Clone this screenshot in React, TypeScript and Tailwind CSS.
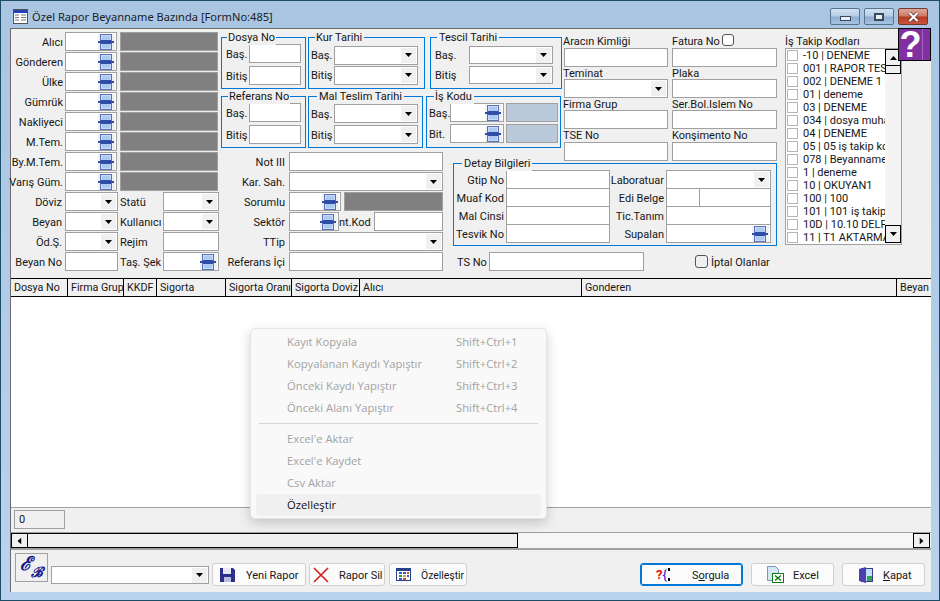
import React from "react";

const Arrow = ({ className = "" }: { className?: string }) => (
  <svg width="7" height="4" viewBox="0 0 7 4" className={className}>
    <path d="M0 0h7L3.5 4z" fill="#000" />
  </svg>
);

const LookupIcon = () => (
  <span className="flex h-[16px] w-[17px] shrink-0 items-center justify-center bg-[#f0f0f0]">
    <svg width="17" height="16" viewBox="0 0 17 16">
      <rect x="2.5" y="0.5" width="11" height="15" fill="#c9defa" stroke="#5a6fb5" />
      <path d="M4 3h8M4 5h8M4 11h8M4 13h8" stroke="#8fb4e8" />
      <rect x="0" y="7" width="16" height="2" fill="#2f4da6" />
      <rect x="3" y="6" width="10" height="4" fill="#2f4da6" />
    </svg>
  </span>
);

const Box = ({ className = "", children }: { className?: string; children?: React.ReactNode }) => (
  <div className={"flex shrink-0 items-center justify-end border border-[#a0a0a0] bg-white " + className}>{children}</div>
);

const Combo = ({ className = "" }: { className?: string }) => (
  <Box className={"pr-px " + className}>
    <span className="flex h-[15px] w-[15px] items-center justify-center bg-[#f0f0f0]">
      <Arrow />
    </span>
  </Box>
);

const Lookup = ({ className = "" }: { className?: string }) => (
  <Box className={"pr-px " + className}>
    <LookupIcon />
  </Box>
);

const Label = ({ className = "", children }: { className?: string; children: React.ReactNode }) => (
  <span className={"mt-[2px] shrink-0 whitespace-nowrap " + className}>{children}</span>
);

const FieldLabel = ({ className = "", children }: { className?: string; children: React.ReactNode }) => (
  <span className={"shrink-0 whitespace-nowrap " + className}>{children}</span>
);

const Group = ({ title, titleClass, className, children }: { title: string; titleClass: string; className: string; children: React.ReactNode }) => (
  <div className={"relative h-[52px] shrink-0 border border-[#0078d7] " + className}>
    <span className={"absolute top-[-7px] whitespace-nowrap bg-[#f0f0f0] px-[1px] leading-[14px] " + titleClass}>{title}</span>
    {children}
  </div>
);

const leftRows = ["Alıcı", "Gönderen", "Ülke", "Gümrük", "Nakliyeci", "M.Tem.", "By.M.Tem.", "Varış Güm."];
const codes = [
  "-10 | DENEME",
  "001 | RAPOR TES",
  "002 | DENEME 1",
  "01 | deneme",
  "03 | DENEME",
  "034 | dosya muha",
  "04 | DENEME",
  "05 | 05 iş takip ko",
  "078 | Beyanname",
  "1 | deneme",
  "10 | OKUYAN1",
  "100 | 100",
  "101 | 101 iş takip",
  "10D | 10.10 DELF",
  "11 | T1 AKTARMA",
];
const columns: [string, string][] = [
  ["Dosya No", "w-[56px]"],
  ["Firma Grup", "w-[56px]"],
  ["KKDF", "w-[33px]"],
  ["Sigorta", "w-[69px]"],
  ["Sigorta Oranı", "w-[66px]"],
  ["Sigorta Doviz", "w-[68px]"],
  ["Alıcı", "w-[222px]"],
  ["Gonderen", "w-[315px]"],
  ["Beyan", "w-[35px]"],
];

const ActionButton = ({ className, icon, label, labelClass }: { className: string; icon: React.ReactNode; label: React.ReactNode; labelClass: string }) => (
  <button className={"flex h-[23px] shrink-0 items-center rounded-[3px] border border-[#d0d0d0] bg-[#fbfbfb] " + className}>
    {icon}
    <span className={"mt-[2px] whitespace-nowrap " + labelClass}>{label}</span>
  </button>
);

const MenuItem = ({ label, shortcut }: { label: string; shortcut?: string }) => (
  <div className="flex h-[22px] items-center pl-[36px] text-[#a3a3a3]">
    <span className="w-[169px] whitespace-nowrap">{label}</span>
    {shortcut && <span className="whitespace-nowrap">{shortcut}</span>}
  </div>
);

export default function App() {
  return (
    <div className="relative h-[601px] w-[940px] overflow-hidden border border-[#1d4c66] bg-gradient-to-b from-[#a9c5e2] to-[#b9d3ee] pl-[9px] pr-[7px] font-['Roboto',sans-serif] text-[11px] leading-[14px] text-[#161616]">
      {/* title bar */}
      <div className="flex h-[27px] items-center pl-[3px] pt-[4px]">
        <svg width="15" height="15" viewBox="0 0 15 15" className="shrink-0">
          <rect x="0.5" y="0.5" width="14" height="14" fill="#fff" stroke="#555" />
          <rect x="1" y="1" width="13" height="3" fill="#2340b8" />
          <path d="M2 6h4M2 8.500h4M2 11h4M8 6h5M8 8.500h5M8 11h5" stroke="#777" />
        </svg>
        <span className="ml-[4px] whitespace-nowrap font-['Noto_Sans',sans-serif] text-[11.1px] text-[#17202a]">Özel Rapor Beyanname Bazında [FormNo:485]</span>
        <div className="ml-auto mr-[4px] flex gap-[4px]">
          <div className="flex h-[17px] w-[30px] items-center justify-center rounded-[2px] border border-[#56748f] bg-[linear-gradient(#d3e2f2_0%,#b7cde6_45%,#8fadd0_55%,#a9c4e2_100%)]">
            <span className="mt-[3px] h-[5px] w-[11px] border border-[#3a4a5c] bg-[#e8eef5]" />
          </div>
          <div className="flex h-[17px] w-[30px] items-center justify-center rounded-[2px] border border-[#56748f] bg-[linear-gradient(#d3e2f2_0%,#b7cde6_45%,#8fadd0_55%,#a9c4e2_100%)]">
            <span className="h-[8px] w-[10px] border-2 border-[#3a4a5c] bg-[#e8eef5]" />
          </div>
          <div className="flex h-[17px] w-[30px] items-center justify-center rounded-[2px] border border-[#6e3a32] bg-[linear-gradient(#dca899_0%,#cf7a68_45%,#b83a22_55%,#c9553d_100%)]">
            <svg width="13" height="10" viewBox="0 0 13 10">
              <path d="M2.500 1l8 8M10.500 1l-8 8" stroke="#3a2a2a" strokeWidth="3.400" />
              <path d="M2.500 1l8 8M10.500 1l-8 8" stroke="#fff" strokeWidth="2.200" />
            </svg>
          </div>
        </div>
      </div>

      {/* client */}
      <div className="flex h-[564px] w-[921px] flex-col border-l border-t border-[#6d6d6d] bg-[#f0f0f0]">
        {/* form */}
        <div className="flex h-[249px] shrink-0 pl-[3px] pt-[3px]">
          {/* column A */}
          <div className="flex w-[205px] shrink-0 flex-col gap-px">
            {leftRows.map((r) => (
              <div key={r} className="flex h-[19px] items-center">
                <Label className="flex w-[49px] justify-end">{r}</Label>
                <Lookup className="ml-[2px] h-[19px] w-[52px]" />
                <div className="ml-[3px] h-[19px] w-[98px] border border-[#a0a0a0] bg-[#808080]" />
              </div>
            ))}
            <div className="flex h-[19px] items-center">
              <Label className="flex w-[48px] justify-end">Döviz</Label>
              <Combo className="ml-[3px] h-[19px] w-[53px]" />
              <Label className="ml-[2px] w-[43px]">Statü</Label>
              <Combo className="h-[19px] w-[56px]" />
            </div>
            <div className="flex h-[19px] items-center">
              <Label className="flex w-[48px] justify-end">Beyan</Label>
              <Combo className="ml-[3px] h-[19px] w-[53px]" />
              <Label className="ml-[2px] w-[43px]">Kullanıcı</Label>
              <Combo className="h-[19px] w-[56px]" />
            </div>
            <div className="flex h-[19px] items-center">
              <Label className="flex w-[48px] justify-end">Öd.Ş.</Label>
              <Combo className="ml-[3px] h-[19px] w-[53px]" />
              <Label className="ml-[2px] w-[43px]">Rejim</Label>
              <Box className="h-[19px] w-[56px]" />
            </div>
            <div className="flex h-[19px] items-center">
              <Label className="flex w-[48px] justify-end">Beyan No</Label>
              <Box className="ml-[3px] h-[19px] w-[53px]" />
              <Label className="ml-[2px] w-[43px]">Taş. Şek</Label>
              <Lookup className="h-[19px] w-[56px]" />
            </div>
          </div>

          {/* middle */}
          <div className="ml-[2px] grid w-[555px] shrink-0 grid-cols-[227px_112px_216px] grid-rows-[118px_12px_110px]">
            {/* groups */}
            <div className="col-span-2 flex flex-col gap-[7px] pt-[5px]">
              <div className="flex">
                <Group title="Dosya No" titleClass="left-[5px]" className="w-[85px]">
                  <div className="flex flex-col gap-[3px] pl-[4px] pt-[6px]">
                    <div className="flex h-[19px] items-center"><Label className="w-[23px]">Baş.</Label><Box className="h-[19px] w-[52px]" /></div>
                    <div className="flex h-[19px] items-center"><Label className="w-[23px]">Bitiş</Label><Box className="h-[19px] w-[52px]" /></div>
                  </div>
                </Group>
                <Group title="Kur Tarihi" titleClass="left-[6px] pr-[2px]" className="ml-[2px] w-[117px]">
                  <div className="flex flex-col gap-[2px] pl-[2px] pt-[8px]">
                    <div className="flex h-[18px] items-center"><Label className="w-[23px]">Baş.</Label><Combo className="h-[19px] w-[84px]" /></div>
                    <div className="flex h-[18px] items-center"><Label className="w-[23px]">Bitiş</Label><Combo className="h-[19px] w-[84px]" /></div>
                  </div>
                </Group>
                <Group title="Tescil Tarihi" titleClass="left-[6px] px-[2px]" className="ml-[5px] w-[132px]">
                  <div className="flex flex-col gap-[2px] pl-[4px] pt-[8px]">
                    <div className="flex h-[18px] items-center"><Label className="w-[34px]">Baş.</Label><Combo className="h-[18px] w-[84px]" /></div>
                    <div className="flex h-[18px] items-center"><Label className="w-[34px]">Bitiş</Label><Combo className="h-[18px] w-[84px]" /></div>
                  </div>
                </Group>
              </div>
              <div className="flex">
                <Group title="Referans No" titleClass="left-[6px]" className="w-[85px]">
                  <div className="flex flex-col gap-[3px] pl-[4px] pt-[6px]">
                    <div className="flex h-[19px] items-center"><Label className="w-[23px]">Baş.</Label><Box className="h-[19px] w-[52px]" /></div>
                    <div className="flex h-[19px] items-center"><Label className="w-[23px]">Bitiş</Label><Box className="h-[19px] w-[52px]" /></div>
                  </div>
                </Group>
                <Group title="Mal Teslim Tarihi" titleClass="left-[8px] px-[2px]" className="ml-[2px] w-[115px]">
                  <div className="flex flex-col gap-[2px] pl-[2px] pt-[7px]">
                    <div className="flex h-[19px] items-center"><Label className="w-[23px]">Baş.</Label><Combo className="h-[19px] w-[84px]" /></div>
                    <div className="flex h-[19px] items-center"><Label className="w-[23px]">Bitiş</Label><Combo className="h-[19px] w-[84px]" /></div>
                  </div>
                </Group>
                <Group title="İş Kodu" titleClass="left-[7px] pr-[2px]" className="ml-[3px] w-[135px]">
                  <div className="flex flex-col gap-[2px] pl-[2px] pt-[6px]">
                    <div className="flex h-[19px] items-center">
                      <Label className="w-[21px]">Baş.</Label><Lookup className="h-[19px] w-[54px]" />
                      <div className="ml-[2px] h-[19px] w-[52px] border border-[#a0a0a0] bg-[#b9c9d9]" />
                    </div>
                    <div className="flex h-[19px] items-center">
                      <Label className="w-[21px]">Bit.</Label><Lookup className="h-[19px] w-[54px]" />
                      <div className="ml-[2px] h-[19px] w-[52px] border border-[#a0a0a0] bg-[#b9c9d9]" />
                    </div>
                  </div>
                </Group>
              </div>
            </div>

            {/* fields */}
            <div className="col-start-3 row-span-2 row-start-1 grid grid-cols-[104px_105px] content-start gap-x-[4px] pl-[4px] pt-[4px]">
              {[
                ["Aracın Kimliği", "Fatura No"],
                ["Teminat", "Plaka"],
                ["Firma Grup", "Ser.Bol.Islem No"],
                ["TSE No", "Konşimento No"],
              ].map(([a, b], i) => (
                <React.Fragment key={a}>
                  <div className="flex flex-col">
                    <FieldLabel className={"-ml-[1px] h-[12px] " + (i ? "leading-[14px]" : "leading-[12px]")}>{a}</FieldLabel>
                    {i === 1 ? <Combo className="h-[19px] w-[104px]" /> : <Box className={"h-[19px] w-[104px] " + (i === 3 ? "mt-px" : "")} />}
                  </div>
                  <div className="flex flex-col">
                    <div className="flex h-[12px] items-start">
                      <FieldLabel className={i ? "leading-[14px]" : "w-[50px] leading-[12px]"}>{b}</FieldLabel>
                      {i === 0 && <span className="-mt-[2px] h-[12px] w-[12px] rounded-[3px] border border-[#555] bg-white" />}
                    </div>
                    <Box className={"h-[19px] w-[105px] " + (i === 3 ? "mt-px" : "")} />
                  </div>
                </React.Fragment>
              ))}
            </div>

            {/* mid rows */}
            <div className="row-span-2 row-start-2 flex flex-col gap-px pt-[2px]">
              <div className="flex h-[19px] items-center"><Label className="flex w-[64px] justify-end">Not III</Label><Box className="ml-[4px] h-[19px] w-[154px]" /></div>
              <div className="flex h-[19px] items-center"><Label className="flex w-[64px] justify-end">Kar. Sah.</Label><Combo className="ml-[4px] h-[19px] w-[154px]" /></div>
              <div className="flex h-[19px] items-center">
                <Label className="flex w-[64px] justify-end">Sorumlu</Label><Lookup className="ml-[4px] h-[19px] w-[52px]" />
                <div className="ml-[3px] h-[19px] w-[99px] border border-[#a0a0a0] bg-[#808080]" />
              </div>
              <div className="flex h-[19px] items-center">
                <Label className="flex w-[64px] justify-end">Sektör</Label><Lookup className="ml-[4px] h-[19px] w-[50px]" />
                <Label className="w-[35px]">nt.Kod</Label><Box className="h-[19px] w-[69px]" />
              </div>
              <div className="flex h-[19px] items-center"><Label className="flex w-[64px] justify-end">TTip</Label><Combo className="ml-[4px] h-[19px] w-[154px]" /></div>
              <div className="flex h-[19px] items-center"><Label className="flex w-[64px] justify-end">Referans İçi</Label><Box className="ml-[4px] h-[19px] w-[154px]" /></div>
            </div>

            {/* detail */}
            <div className="col-span-2 col-start-2 row-start-3 pl-[5px] pt-[1px]">
              <div className="relative h-[83px] w-[324px] border border-[#0078d7] pt-[6px]">
                <span className="absolute left-[8px] top-[-7px] whitespace-nowrap bg-[#f0f0f0] px-[2px] leading-[14px]">Detay Bilgileri</span>
                <div className="flex">
                  <div className="flex flex-col">
                    {["Gtip No", "Muaf Kod", "Mal Cinsi", "Tesvik No"].map((l, i) => (
                      <div key={l} className={"flex h-[19px] items-center " + (i ? "-mt-px" : "")}>
                        <Label className="flex w-[50px] justify-end">{l}</Label>
                        <Box className="ml-[2px] h-[19px] w-[104px]" />
                      </div>
                    ))}
                  </div>
                  <div className="ml-[2px] flex flex-col">
                    {["Laboratuar", "Edi Belge", "Tic.Tanım", "Supalan"].map((l, i) => (
                      <div key={l} className={"flex h-[19px] items-center " + (i ? "-mt-px" : "")}>
                        <Label className="flex w-[52px] justify-end">{l}</Label>
                        {i === 0 && <Combo className="ml-[2px] h-[19px] w-[105px]" />}
                        {i === 1 && (
                          <>
                            <Box className="ml-[2px] h-[19px] w-[34px]" />
                            <Box className="-ml-px h-[19px] w-[72px]" />
                          </>
                        )}
                        {i === 2 && <Box className="ml-[2px] h-[19px] w-[105px]" />}
                        {i === 3 && <Lookup className="ml-[2px] h-[19px] w-[105px]" />}
                      </div>
                    ))}
                  </div>
                </div>
              </div>
              <div className="mt-[6px] flex h-[19px] items-center pl-[4px]">
                <Label className="w-[32px]">TS No</Label>
                <Box className="h-[19px] w-[155px]" />
                <span className="ml-[51px] h-[13px] w-[13px] rounded-[3px] border border-[#555] bg-[#f0f0f0]" />
                <Label className="ml-[3px]">İptal Olanlar</Label>
              </div>
            </div>
          </div>

          {/* code list */}
          <div className="ml-[9px] flex w-[117px] shrink-0 flex-col pt-[4px]">
            <FieldLabel className="h-[12px] leading-[12px]">İş Takip Kodları</FieldLabel>
            <div className="flex h-[197px] border border-[#a0a0a0] bg-white">
              <div className="w-[99px] shrink-0 overflow-hidden">
                {codes.map((c) => (
                  <div key={c} className="flex h-[13px] items-center pl-[1px]">
                    <span className="h-[11px] w-[11px] shrink-0 border border-[#b5b5b5] bg-white" />
                    <span className="ml-[5px] whitespace-nowrap">{c}</span>
                  </div>
                ))}
              </div>
              <div className="flex flex-1 flex-col bg-[#f4f4f4]">
                <div className="flex h-[17px] items-center justify-center border border-black bg-[#f0f0f0]"><Arrow className="rotate-180" /></div>
                <div className="-mt-px h-[9px] border border-black bg-[#f0f0f0]" />
                <div className="mt-auto flex h-[18px] items-center justify-center border border-black bg-[#f0f0f0]"><Arrow /></div>
                <div className="h-px" />
              </div>
            </div>
          </div>
        </div>

        {/* table */}
        <div className="flex h-[19px] shrink-0 border-y border-black text-[10.7px]">
          {columns.map(([c, w], i) => (
            <div key={c} className={"flex h-full shrink-0 items-center overflow-hidden whitespace-nowrap pl-[3px] " + w + (i ? " border-l border-black" : "")}>{c}</div>
          ))}
        </div>
        <div className="h-[211px] shrink-0 border-b border-[#a0a0a0] bg-white" />
        <div className="h-[24px] shrink-0 pl-[3px] pt-[2px]">
          <div className="flex h-[19px] w-[51px] items-center border border-[#a0a0a0] pl-[4px]">0</div>
        </div>
        <div className="flex h-[18px] shrink-0 border-b-2 border-t border-[#a0a0a0] bg-[#f6f6f6]">
          <div className="flex w-[17px] items-center justify-center border border-black bg-[#f0f0f0]"><Arrow className="rotate-90" /></div>
          <div className="-ml-px w-[491px] border border-black bg-[#f0f0f0]" />
          <div className="ml-auto mr-px flex w-[17px] items-center justify-center border border-black bg-[#f0f0f0]"><Arrow className="-rotate-90" /></div>
        </div>

        {/* bottom bar */}
        <div className="flex flex-1 items-start pl-[4px] pt-[3px]">
          <div className="flex h-[29px] w-[33px] shrink-0 items-center justify-center border border-[#a0a0a0] font-['DejaVu_Serif',serif] font-bold italic leading-none text-[#14148c]">
            <span className="-mt-[8px] text-[19px]">ℰ</span><span className="mt-[9px] text-[14px]">ℬ</span>
          </div>
          <Combo className="ml-[3px] mt-[13px] h-[18px] w-[158px]" />
          <ActionButton
            className="ml-[3px] mt-[10px] w-[94px] pl-[7px]"
            labelClass="ml-[11px]"
            label="Yeni Rapor"
            icon={
              <svg width="15" height="15" viewBox="0 0 15 15" className="shrink-0">
                <path d="M0 1h13l2 2v12H0z" fill="#2b2f8f" />
                <rect x="3" y="1" width="8" height="6" fill="#e8e8f4" />
                <rect x="4" y="10" width="7" height="5" fill="#b9bde0" />
              </svg>
            }
          />
          <ActionButton
            className="ml-[3px] mt-[10px] w-[76px] pl-[3px]"
            labelClass="ml-[10px]"
            label="Rapor Sil"
            icon={
              <svg width="16" height="16" viewBox="0 0 16 16" className="shrink-0">
                <path d="M1 1l14 14M15 1L1 15" stroke="#d4201a" strokeWidth="1.600" />
              </svg>
            }
          />
          <ActionButton
            className="ml-[4px] mt-[10px] w-[78px] pl-[6px]"
            labelClass="ml-[10px] text-[10.4px]"
            label="Özelleştir"
            icon={
              <svg width="15" height="13" viewBox="0 0 15 13" className="shrink-0">
                <rect x="0.500" y="0.500" width="14" height="12" fill="#fff" stroke="#27408b" />
                <rect x="1" y="1" width="13" height="2" fill="#27408b" />
                <rect x="3" y="4" width="3" height="2" fill="#2b5fd0" />
                <rect x="7" y="4" width="3" height="2" fill="#2b5fd0" />
                <rect x="11" y="4" width="2" height="2" fill="#d04a2b" />
                <rect x="3" y="7" width="3" height="2" fill="#2e9b3b" />
                <rect x="7" y="7" width="3" height="2" fill="#e0a020" />
                <rect x="11" y="7" width="2" height="2" fill="#2b5fd0" />
                <rect x="3" y="10" width="3" height="2" fill="#2b5fd0" />
                <rect x="7" y="10" width="3" height="2" fill="#d04a2b" />
              </svg>
            }
          />
          <ActionButton
            className="ml-[173px] mt-[10px] w-[103px] !border-[#0078d7] pl-[15px] outline outline-1 outline-[#0078d7] -outline-offset-2"
            labelClass="ml-[18px]"
            label={<><span>S</span><span className="underline">o</span><span>rgula</span></>}
            icon={
              <span className="flex w-[18px] shrink-0 items-center text-[13px] font-bold leading-none">
                <span className="text-[#e01010]">?</span>
                <span className="font-normal text-[#1a1ad0]">{"{"}</span>
                <span className="ml-px h-[13px] w-[2px] border-y-[3px] border-black bg-white" />
              </span>
            }
          />
          <ActionButton
            className="ml-[8px] mt-[10px] w-[83px] pl-[15px]"
            labelClass="ml-[9px]"
            label="Excel"
            icon={
              <svg width="17" height="17" viewBox="0 0 17 17" className="shrink-0">
                <path d="M0.500 0.500h8l3 3v11h-11z" fill="#d7e6f7" stroke="#7d94b5" />
                <rect x="5.500" y="7.500" width="11" height="9" fill="#fff" stroke="#0e7a12" />
                <path d="M8 9.500l6 5M14 9.500l-6 5" stroke="#0e7a12" strokeWidth="1.500" />
              </svg>
            }
          />
          <ActionButton
            className="ml-[8px] mt-[10px] w-[83px] pl-[16px]"
            labelClass="ml-[10px]"
            label={<><span className="underline">K</span><span>apat</span></>}
            icon={
              <svg width="14" height="16" viewBox="0 0 14 16" className="shrink-0">
                <rect x="2.500" y="1.500" width="11" height="13" fill="#bfe3f5" stroke="#3b3b8f" />
                <rect x="8" y="9" width="5" height="5" fill="#37a64a" />
                <path d="M0 2l7-2v16l-7-2z" fill="#4b3fae" />
              </svg>
            }
          />
        </div>
      </div>
      <div className="h-[9px]" />

      {/* help badge */}
      <div className="absolute left-[897px] top-[27px] flex h-[33px] w-[33px] border border-black bg-[#8030a0]">
        <span className="w-[23px] text-center font-['Liberation_Sans',sans-serif] text-[36px] font-bold leading-[31px] text-white">?</span>
        <span className="h-full w-px bg-[#a565bd]" />
      </div>

      {/* context menu */}
      <div className="absolute left-[249px] top-[327px] flex h-[191px] w-[297px] flex-col rounded-[5px] border border-[#e4e4e4] bg-[#f9f9f9] px-[5px] pt-[2px] font-['Open_Sans',sans-serif] text-[11.25px] shadow-[0_4px_12px_rgba(0,0,0,0.18)] [&>div]:-mx-[5px]">
        <MenuItem label="Kayıt Kopyala" shortcut="Shift+Ctrl+1" />
        <MenuItem label="Kopyalanan Kaydı Yapıştır" shortcut="Shift+Ctrl+2" />
        <MenuItem label="Önceki Kaydı Yapıştır" shortcut="Shift+Ctrl+3" />
        <MenuItem label="Önceki Alanı Yapıştır" shortcut="Shift+Ctrl+4" />
        <div className="!mx-[3px] mb-[4px] mt-[4px] h-px bg-[#d5d5d5]" />
        <MenuItem label="Excel'e Aktar" />
        <MenuItem label="Excel'e Kaydet" />
        <MenuItem label="Csv Aktar" />
        <div className="!mx-[0px] flex h-[22px] items-center rounded-[4px] bg-[#f0f0f0] pl-[31px] text-[#111]">Özelleştir</div>
      </div>
    </div>
  );
}
